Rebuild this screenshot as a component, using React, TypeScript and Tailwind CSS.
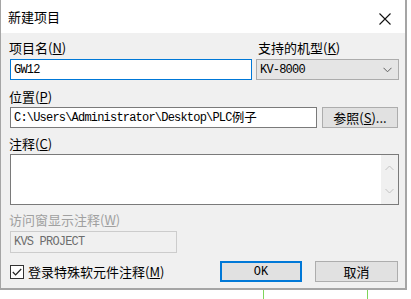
import { ReactNode } from 'react';

const CJK = { fontFamily: '"Noto Sans CJK SC", "Noto Sans", sans-serif' };
const MONO = { fontFamily: '"Liberation Mono", "Noto Sans CJK SC", monospace' };

function Label(props: { text: string, keyChar: string, mt: string, disabled?: boolean, className?: string }) {
    return (
        <div
            className={"h-[14px] leading-[14px] text-[13px] whitespace-nowrap " + props.mt + " " + (props.disabled ? "text-[#a0a0a0]" : "text-black") + " " + (props.className || "")}
            style={CJK}>
            {props.text}(<u>{props.keyChar}</u>)
        </div>
    );
}

function Field(props: { children: ReactNode, className: string }) {
    return (
        <div className={"flex items-center pl-[3px] text-[12px] tracking-[-0.8px] whitespace-nowrap " + props.className} style={MONO}>
            {props.children}
        </div>
    );
}

function App() {
    return (
        <div className="w-[411px] h-[299px] bg-white relative overflow-hidden">
            <div className="w-[407px] h-[290px] border-l border-r-2 border-b-2 border-[#a5a5a5] flex flex-col bg-[#f0f0f0]">
                {/* title bar */}
                <div className="h-[33px] bg-white flex items-center justify-between pl-[7px] pr-[14px] shrink-0">
                    <span className="text-[13px] leading-[14px] text-black" style={CJK}>新建项目</span>
                    <svg width="12" height="12" viewBox="0 0 12 12" className="mt-[4px]">
                        <path d="M0.5 0.5 L11.5 11.5 M11.5 0.5 L0.5 11.5" stroke="#111" strokeWidth="1.1" fill="none" />
                    </svg>
                </div>

                <div className="flex flex-col pl-[9px] pr-[7px]">
                    {/* row 1 */}
                    <div className="flex">
                        <div className="flex flex-col">
                            <Label text="项目名" keyChar="N" mt="mt-[8px]" className="-ml-[1px]" />
                            <Field className="mt-[4px] w-[242px] h-[21px] bg-white border border-[#0078d7]">GW12</Field>
                        </div>
                        <div className="flex flex-col ml-[4px]">
                            <Label text="支持的机型" keyChar="K" mt="mt-[8px]" className="ml-[2px]" />
                            <div className="mt-[4px] w-[143px] h-[21px] bg-[#e5e5e5] border border-[#acacac] flex items-center justify-between pr-[6px]">
                                <Field className="">KV-8000</Field>
                                <svg width="9" height="6" viewBox="0 0 9 6">
                                    <path d="M0.5 0.8 L4.5 4.8 L8.5 0.8" stroke="#606060" strokeWidth="1" fill="none" />
                                </svg>
                            </div>
                        </div>
                    </div>

                    {/* row 2 */}
                    <Label text="位置" keyChar="P" mt="mt-[10px]" className="-ml-[1px]" />
                    <div className="flex mt-[3px] items-center">
                        <Field className="w-[307px] h-[21px] bg-white border border-[#7a7a7a]">
                            C:\Users\Administrator\Desktop\PLC<span className="text-[12.5px] tracking-normal" style={CJK}>例子</span>
                        </Field>
                        <button className="ml-[5px] w-[76px] h-[21px] bg-[#e1e1e1] border border-[#adadad] text-[13px] leading-[14px] text-black flex items-center justify-center" style={CJK}>
                            参照(<u>S</u>)...
                        </button>
                    </div>

                    {/* row 3 */}
                    <Label text="注释" keyChar="C" mt="mt-[9px]" className="-ml-[1px]" />
                    <div className="mt-[3px] w-[389px] h-[51px] bg-white border border-[#7a7a7a] flex justify-end">
                        <div className="w-[17px] h-full bg-[#f0f0f0] flex flex-col items-center justify-between py-[10px]">
                            <svg width="9" height="6" viewBox="0 0 9 6">
                                <path d="M0.5 5 L4.5 1 L8.5 5" stroke="#c2c2c2" strokeWidth="1" fill="none" />
                            </svg>
                            <svg width="9" height="6" viewBox="0 0 9 6">
                                <path d="M0.5 1 L4.5 5 L8.5 1" stroke="#c2c2c2" strokeWidth="1" fill="none" />
                            </svg>
                        </div>
                    </div>

                    {/* row 4 */}
                    <Label text="访问窗显示注释" keyChar="W" mt="mt-[8px]" disabled className="-ml-[1px]" />
                    <Field className="mt-[4px] w-[167px] h-[22px] bg-[#f0f0f0] border border-[#cccccc] text-[#6d6d6d]">KVS PROJECT</Field>

                    {/* row 5 */}
                    <div className="flex items-center mt-[8px] h-[21px]">
                        <div className="w-[14px] h-[14px] border border-[#333] bg-white flex items-center justify-center">
                            <svg width="10" height="8" viewBox="0 0 10 8">
                                <path d="M0.8 4 L3.6 6.8 L9.2 1" stroke="#222" strokeWidth="1.2" fill="none" />
                            </svg>
                        </div>
                        <span className="ml-[4px] text-[13px] leading-[14px] text-black whitespace-nowrap" style={CJK}>登录特殊软元件注释(<u>M</u>)</span>
                        <button className="ml-auto w-[82px] h-[21px] bg-[#e1e1e1] border-2 border-[#0078d7] text-[12px] text-black flex items-center justify-center" style={MONO}>
                            OK
                        </button>
                        <button className="ml-[13px] w-[83px] h-[21px] bg-[#e1e1e1] border border-[#adadad] text-[13px] leading-[14px] text-black flex items-center justify-center" style={CJK}>
                            取消
                        </button>
                    </div>
                </div>
            </div>
            <div className="flex h-[9px]">
                <div className="ml-[263px] w-[1px] h-full bg-[#7fd45a]" />
                <div className="ml-[103px] w-[1px] h-full bg-[#7fd45a]" />
            </div>
        </div>
    );
}

export default App;
